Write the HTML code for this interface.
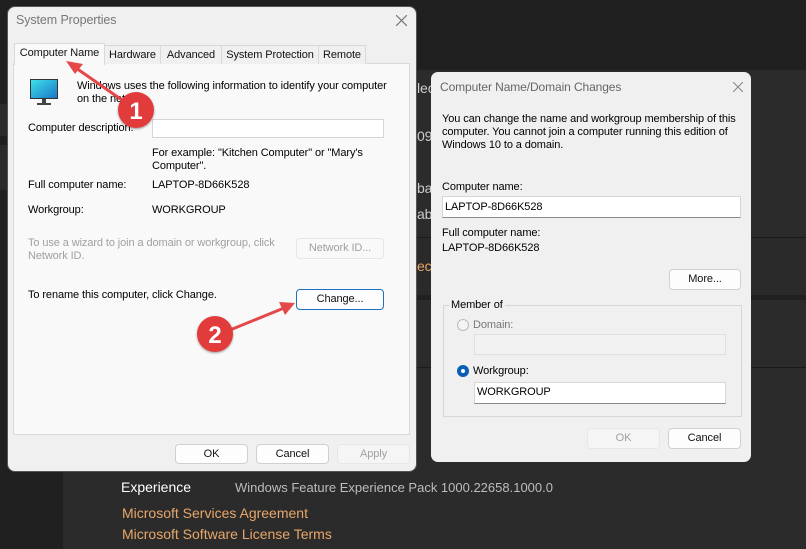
<!DOCTYPE html>
<html><head><meta charset="utf-8"><style>
*{margin:0;padding:0;box-sizing:border-box}
body{width:806px;height:549px;overflow:hidden;background:#202020;font-family:"Liberation Sans",sans-serif;font-size:11px;letter-spacing:-0.1px;color:#000;position:relative}
.a{position:absolute;white-space:nowrap}
.btn{position:absolute;background:#fdfdfd;border:1px solid #d0d0d0;border-radius:4px;text-align:center;font-size:11px;line-height:18px;color:#111;white-space:nowrap}
.dis{background:#f5f5f5;border-color:#e6e6e6;color:#a0a0a0}
.inp{position:absolute;background:#fff;border:1px solid #d6d6d6;border-bottom-color:#8a8a8a}
.tab{position:absolute;top:45px;height:19px;border:1px solid #d9d9d9;border-bottom:none;background:#f0f0f0;font-size:11px;line-height:18px;text-align:center;color:#111;white-space:nowrap;overflow:hidden}
</style></head><body>
<div class="a" style="left:63px;top:70px;width:743px;height:167px;background:#2b2b2b"></div>
<div class="a" style="left:63px;top:237px;width:743px;height:1px;background:#1a1a1a"></div>
<div class="a" style="left:63px;top:238px;width:743px;height:57px;background:#2a2a2a"></div>
<div class="a" style="left:63px;top:300px;width:743px;height:67px;background:#2b2b2b"></div>
<div class="a" style="left:63px;top:367px;width:743px;height:1px;background:#1a1a1a"></div>
<div class="a" style="left:63px;top:368px;width:743px;height:181px;background:#2b2b2b"></div>
<div class="a" style="left:0;top:104px;width:8px;height:32px;background:#2b2b2b"></div>
<div class="a" style="left:0;top:145px;width:8px;height:45px;background:#2b2b2b"></div>
<div class="a" style="left:417px;top:80px;color:#ccc;font-size:14px">lec</div>
<div class="a" style="left:417px;top:128px;color:#ccc;font-size:14px">09</div>
<div class="a" style="left:417px;top:180px;color:#ccc;font-size:14px">ba</div>
<div class="a" style="left:417px;top:206px;color:#ccc;font-size:14px">ab</div>
<div class="a" style="left:417px;top:258px;color:#e8a66a;font-size:14px">ect</div>
<div class="a" style="left:121px;top:479px;color:#fff;font-size:14px;letter-spacing:0">Experience</div>
<div class="a" style="left:235px;top:480px;color:#bdbdbd;font-size:13px;letter-spacing:0">Windows Feature Experience Pack 1000.22658.1000.0</div>
<div class="a" style="left:122px;top:505px;color:#e8a66a;font-size:14px;letter-spacing:0">Microsoft Services Agreement</div>
<div class="a" style="left:122px;top:526px;color:#e8a66a;font-size:14px;letter-spacing:0">Microsoft Software License Terms</div>

<div class="a" style="left:7px;top:6px;width:410px;height:466px;background:#f0f0f0;border-radius:8px;border:1px solid #555"></div>
<div class="a" style="left:16px;top:13px;color:#777;font-size:12.5px">System Properties</div>
<svg class="a" style="left:396px;top:15px" width="11" height="11"><path d="M0 0L11 11M11 0L0 11" stroke="#777" stroke-width="1.2"/></svg>
<div class="a" style="left:13px;top:63px;width:397px;height:372px;background:#f9f9f9;border:1px solid #d9d9d9"></div>
<div class="tab" style="left:104px;width:57px">Hardware</div>
<div class="tab" style="left:160px;width:62px">Advanced</div>
<div class="tab" style="left:221px;width:98px">System Protection</div>
<div class="tab" style="left:318px;width:48px">Remote</div>
<div class="tab" style="left:14px;top:43px;width:91px;height:22px;background:#f9f9f9;line-height:18px">Computer Name</div>
<svg class="a" style="left:30px;top:78px" width="30" height="28"><defs><linearGradient id="g" x1="0" y1="0" x2="1" y2="1"><stop offset="0" stop-color="#3ee0ea"/><stop offset="1" stop-color="#1a78c8"/></linearGradient></defs><rect x="0" y="1" width="28" height="20" fill="#333"/><rect x="1" y="2" width="26" height="18" fill="url(#g)"/><rect x="12" y="21" width="4" height="4" fill="#444"/><rect x="7" y="25" width="14" height="2" fill="#444"/></svg>
<div class="a" style="left:77px;top:80px;line-height:13px">Windows uses the following information to identify your computer<br>on the network.</div>
<div class="a" style="left:28px;top:122px">Computer description:</div>
<div class="inp" style="left:152px;top:119px;width:232px;height:19px;border-color:#d6d6d6"></div>
<div class="a" style="left:152px;top:147px;line-height:13px">For example: "Kitchen Computer" or "Mary's<br>Computer".</div>
<div class="a" style="left:28px;top:179px">Full computer name:</div>
<div class="a" style="left:152px;top:179px">LAPTOP-8D66K528</div>
<div class="a" style="left:28px;top:204px">Workgroup:</div>
<div class="a" style="left:152px;top:204px">WORKGROUP</div>
<div class="a" style="left:28px;top:237px;line-height:13px;color:#a0a0a0">To use a wizard to join a domain or workgroup, click<br>Network ID.</div>
<div class="btn dis" style="left:296px;top:238px;width:88px;height:21px;background:#f9f9f9">Network ID...</div>
<div class="a" style="left:28px;top:289px">To rename this computer, click Change.</div>
<div class="btn" style="left:296px;top:289px;width:88px;height:21px;border-color:#1a6fc0">Change...</div>
<div class="btn" style="left:175px;top:444px;width:73px;height:20px">OK</div>
<div class="btn" style="left:256px;top:444px;width:73px;height:20px">Cancel</div>
<div class="btn dis" style="left:337px;top:444px;width:73px;height:20px">Apply</div>

<div class="a" style="left:431px;top:72px;width:320px;height:390px;background:#f0f0f0;border-radius:7px"></div>
<div class="a" style="left:440px;top:80px;color:#666;font-size:12px">Computer Name/Domain Changes</div>
<svg class="a" style="left:733px;top:82px" width="10" height="10"><path d="M0 0L10 10M10 0L0 10" stroke="#888" stroke-width="1.1"/></svg>
<div class="a" style="left:442px;top:113px;line-height:13px">You can change the name and workgroup membership of this<br>computer. You cannot join a computer running this edition of<br>Windows 10 to a domain.</div>
<div class="a" style="left:442px;top:181px">Computer name:</div>
<div class="inp" style="left:442px;top:196px;width:299px;height:22px"></div>
<div class="a" style="left:445px;top:201px">LAPTOP-8D66K528</div>
<div class="a" style="left:442px;top:227px">Full computer name:</div>
<div class="a" style="left:442px;top:242px">LAPTOP-8D66K528</div>
<div class="btn" style="left:669px;top:269px;width:72px;height:21px">More...</div>
<div class="a" style="left:443px;top:305px;width:299px;height:112px;border:1px solid #d6d6d6"></div>
<div class="a" style="left:449px;top:299px;background:#f0f0f0;padding:0 2px">Member of</div>
<div class="a" style="left:457px;top:319px;width:12px;height:12px;border:1px solid #bbb;border-radius:50%;background:#f4f4f4"></div>
<div class="a" style="left:473px;top:319px;color:#777">Domain:</div>
<div class="a" style="left:474px;top:334px;width:252px;height:21px;border:1px solid #e0e0e0;background:#f2f2f2"></div>
<div class="a" style="left:457px;top:365px;width:12px;height:12px;border-radius:50%;background:#0a5fb4"></div>
<div class="a" style="left:461px;top:369px;width:4px;height:4px;border-radius:50%;background:#fff"></div>
<div class="a" style="left:473px;top:365px">Workgroup:</div>
<div class="inp" style="left:474px;top:382px;width:252px;height:22px"></div>
<div class="a" style="left:477px;top:386px">WORKGROUP</div>
<div class="btn dis" style="left:587px;top:428px;width:73px;height:21px">OK</div>
<div class="btn" style="left:668px;top:428px;width:73px;height:21px">Cancel</div>

<svg class="a" style="left:0;top:0" width="806" height="549">
<defs><filter id="s"><feDropShadow dx="0" dy="1" stdDeviation="1" flood-opacity=".4"/></filter></defs>
<line x1="122" y1="100" x2="76" y2="68" stroke="#e54848" stroke-width="3"/>
<path d="M66 61L83 64L75 74Z" fill="#e54848"/>
<line x1="230" y1="330" x2="284" y2="308" stroke="#e54848" stroke-width="3"/>
<path d="M295 303L279 302L285 315Z" fill="#e54848"/>
<circle cx="136" cy="110" r="18" fill="#e23b3b" filter="url(#s)"/>
<text x="136" y="119" text-anchor="middle" font-family="Liberation Sans" font-weight="bold" font-size="24" fill="#fff">1</text>
<circle cx="215" cy="334" r="18" fill="#e23b3b" filter="url(#s)"/>
<text x="215" y="343" text-anchor="middle" font-family="Liberation Sans" font-weight="bold" font-size="24" fill="#fff">2</text>
</svg>
</body></html>
